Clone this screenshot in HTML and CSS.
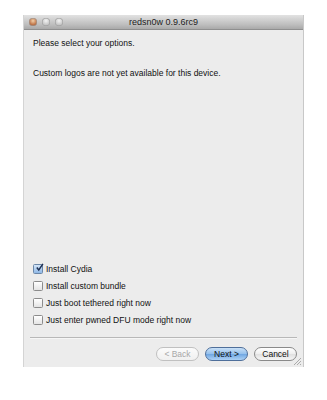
FILE: index.html
```html
<!DOCTYPE html>
<html>
<head>
<meta charset="utf-8">
<link rel="stylesheet" href="styles.css">
</head>
<body>
<div class="window">
  <div class="titlebar">
    <div class="lights">
      <span class="light red"></span>
      <span class="light"></span>
      <span class="light"></span>
    </div>
    <div class="title">redsn0w 0.9.6rc9</div>
  </div>
  <div class="content">
    <p class="msg first">Please select your options.</p>
    <p class="msg">Custom logos are not yet available for this device.</p>
    <div class="spacer"></div>
    <div class="options">
      <label class="opt"><span class="box checked"><svg viewBox="0 0 10 10" width="9" height="9"><path d="M2 5 L4.2 7.8 L8.8 1" fill="none" stroke="#1d2f52" stroke-width="1.6"/></svg></span>Install Cydia</label>
      <label class="opt"><span class="box"></span>Install custom bundle</label>
      <label class="opt"><span class="box"></span>Just boot tethered right now</label>
      <label class="opt"><span class="box"></span>Just enter pwned DFU mode right now</label>
    </div>
  </div>
  <div class="sep"></div>
  <div class="buttons">
    <span class="btn disabled">&lt; Back</span>
    <span class="btn primary">Next &gt;</span>
    <span class="btn">Cancel</span>
  </div>
  <svg class="grip" width="9" height="9" viewBox="0 0 9 9"><path d="M8 1 L1 8 M8 4 L4 8 M8 7 L7 8" stroke="#9a9a9a" stroke-width="0.8"/></svg>
</div>
</body>
</html>
```
FILE: styles.css
```css
html, body {
  margin: 0;
  padding: 0;
  background: #fff;
}
body {
  font-family: "Liberation Sans", Arial, sans-serif;
  font-size: 8.5px;
  color: #111;
}
.window {
  position: relative;
  margin: 15px 0 0 24px;
  width: 279px;
  height: 352px;
  background: #ececec;
  display: flex;
  flex-direction: column;
  box-shadow: 1px 0 0 #c8c8c8, 0 1px 0 #8e8e8e, -1px 0 0 #d4d4d4;
}
.titlebar {
  height: 14px;
  background: linear-gradient(#e2e2e2, #bdbdbd 70%, #a9a9a9);
  border-bottom: 1px solid #8f8f8f;
  display: flex;
  align-items: center;
  position: relative;
}
.lights {
  display: flex;
  gap: 5px;
  margin-left: 5px;
}
.light {
  width: 8px;
  height: 8px;
  border-radius: 50%;
  background: radial-gradient(circle at 50% 35%, #f4f4f4, #c6c6c6 60%, #a8a8a8);
  box-shadow: inset 0 0 0 0.5px #9a9a9a;
}
.light.red {
  background: radial-gradient(circle at 50% 35%, #f2cfa8, #c27a4e 55%, #8a4a2b);
}
.title {
  position: absolute;
  left: 0;
  right: 0;
  text-align: center;
  font-size: 9px;
  color: #222;
}
.content {
  flex: 1;
  display: flex;
  flex-direction: column;
  padding: 0 9px;
}
.msg {
  margin: 0;
  line-height: 11px;
}
.msg.first {
  margin-top: 8px;
  margin-bottom: 19px;
}
.spacer {
  flex: 1;
}
.options {
  display: flex;
  flex-direction: column;
  gap: 6px;
  margin-bottom: 12px;
}
.opt {
  display: flex;
  align-items: center;
  height: 11px;
  gap: 3px;
}
.box {
  width: 8px;
  height: 8px;
  border: 1px solid #8c8c8c;
  border-radius: 1.5px;
  background: linear-gradient(#ffffff, #e4e4e4);
  display: flex;
  align-items: center;
  justify-content: center;
  box-sizing: content-box;
}
.box.checked {
  background: linear-gradient(#d3e5f8, #8fb8e6);
  border-color: #6b87a8;
}
.box svg {
  margin-top: -2px;
  margin-right: -2px;
}
.sep {
  height: 1px;
  background: #b8b8b8;
  border-bottom: 1px solid #f6f6f6;
  margin: 0 6px;
}
.buttons {
  display: flex;
  justify-content: flex-end;
  gap: 6px;
  padding: 8px 6px 6px 0;
}
.btn {
  width: 41px;
  height: 12px;
  line-height: 12px;
  border: 1px solid #8a8a8a;
  border-radius: 7px;
  text-align: center;
  font-size: 8.5px;
  background: linear-gradient(#ffffff, #eeeeee 50%, #e0e0e0 51%, #f6f6f6);
  color: #111;
}
.btn.disabled {
  color: #a8a8a8;
  border-color: #c0c0c0;
  background: linear-gradient(#fbfbfb, #f0f0f0);
}
.btn.primary {
  border-color: #4f6f9a;
  background: linear-gradient(#c9e0f7, #93bfec 50%, #6ea6e2 51%, #aed2f5);
}
.grip {
  position: absolute;
  right: 1px;
  bottom: 1px;
}
```
